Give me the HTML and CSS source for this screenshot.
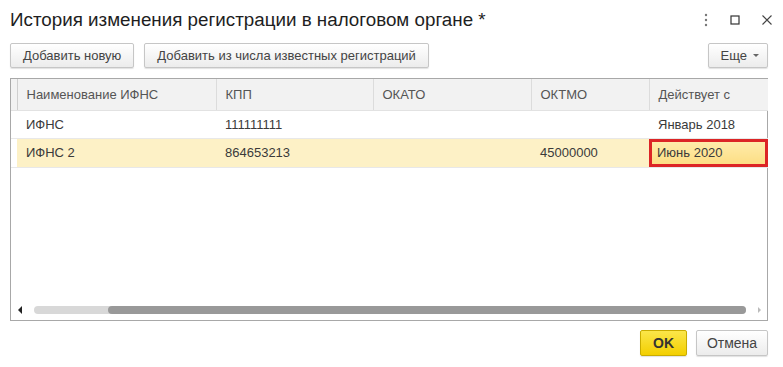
FILE: index.html
```html
<!DOCTYPE html>
<html lang="ru">
<head>
  <meta charset="UTF-8">
  <title>История изменения регистрации в налоговом органе</title>
  <link rel="stylesheet" href="styles.css">
</head>
<body>
<div class="dialog">
  <div class="titlebar">
    <h1 class="title">История изменения регистрации в налоговом органе *</h1>
    <div class="window-controls">
      <svg width="6" height="14" viewBox="0 0 6 14"><circle cx="3" cy="2" r="1.2" fill="#777"/><circle cx="3" cy="7" r="1.2" fill="#777"/><circle cx="3" cy="12" r="1.2" fill="#777"/></svg>
      <svg width="12" height="12" viewBox="0 0 12 12"><rect x="2" y="2" width="8" height="8" fill="none" stroke="#333" stroke-width="1.2"/></svg>
      <svg width="12" height="12" viewBox="0 0 12 12"><path d="M1.5 1.5 L10.5 10.5 M10.5 1.5 L1.5 10.5" stroke="#444" stroke-width="1.1"/></svg>
    </div>
  </div>

  <div class="toolbar">
    <button class="btn">Добавить новую</button>
    <button class="btn">Добавить из числа известных регистраций</button>
    <span class="spacer"></span>
    <button class="btn btn-more">Еще <span class="caret"></span></button>
  </div>

  <!-- Таблица регистраций -->
  <div class="grid">
    <table class="grid-table">
      <colgroup>
        <col class="c0"><col class="c1"><col class="c2"><col class="c3"><col class="c4"><col class="c5">
      </colgroup>
      <thead>
      <tr>
        <th class="mark"></th>
        <th>Наименование ИФНС</th>
        <th>КПП</th>
        <th>ОКАТО</th>
        <th>ОКТМО</th>
        <th>Действует с</th>
      </tr>
      </thead>
      <tbody>
      <tr>
        <td class="mark"></td>
        <td>ИФНС</td>
        <td>111111111</td>
        <td></td>
        <td></td>
        <td>Январь 2018</td>
      </tr>
      <tr class="selected">
        <td class="mark"></td>
        <td>ИФНС 2</td>
        <td>864653213</td>
        <td></td>
        <td>45000000</td>
        <td class="current">Июнь 2020</td>
      </tr>
      </tbody>
    </table>
    <div class="grid-empty"></div>
    <div class="hscroll">
      <span class="arrow-left"></span>
      <div class="track"><div class="thumb"></div></div>
      <span class="arrow-right"></span>
    </div>
  </div>

  <div class="footer">
    <button class="btn btn-ok">OK</button>
    <button class="btn btn-cancel">Отмена</button>
  </div>
</div>
</body>
</html>
```

FILE: styles.css
```css
* {
  margin: 0;
  padding: 0;
  box-sizing: border-box;
}

body {
  background: #fff;
  font-family: 'Liberation Sans', Arial, sans-serif;
  color: #333;
  width: 783px;
  height: 367px;
  overflow: hidden;
}

.dialog {
  padding: 0 15px 0 10px;
}

.titlebar {
  height: 43px;
  display: flex;
  align-items: flex-start;
  padding-top: 8px;
}

.title {
  flex: 1;
  font-size: 18.8px;
  font-weight: normal;
  color: #1e1e1e;
  line-height: 24px;
}

.window-controls {
  display: flex;
  align-items: center;
  gap: 20px;
  height: 24px;
  margin-right: -5px;
}

.toolbar {
  display: flex;
  gap: 10px;
  height: 25px;
  margin-bottom: 10px;
}

.spacer {
  flex: 1;
}

.btn {
  font-family: inherit;
  font-size: 13px;
  color: #444;
  height: 25px;
  padding: 0 12px;
  border: 1px solid #c6c6c6;
  border-radius: 2px;
  background: linear-gradient(#fff, #ececec);
  box-shadow: 0 1px 1px rgba(0, 0, 0, 0.12);
}

.btn-more {
  padding: 0 8px 0 12px;
  display: flex;
  align-items: center;
  gap: 6px;
}

.caret {
  width: 0;
  height: 0;
  border-left: 3px solid transparent;
  border-right: 3px solid transparent;
  border-top: 3px solid #666;
}

.grid {
  border: 1px solid #a8a8a8;
  height: 243px;
  display: flex;
  flex-direction: column;
}

.grid-table {
  width: 100%;
  border-collapse: collapse;
  table-layout: fixed;
  font-size: 13px;
}

.c0 { width: 6px; }
.c1 { width: 199px; }
.c2 { width: 157px; }
.c3 { width: 158px; }
.c4 { width: 118px; }
.c5 { width: 119px; }

.grid-table th {
  height: 31px;
  background: #f2f2f2;
  font-weight: normal;
  color: #555;
  text-align: left;
  padding: 0 9px;
  border-right: 1px solid #dcdcdc;
  border-bottom: 1px solid #e2e2e2;
}

.grid-table th:last-child {
  border-right: none;
}

.grid-table th.mark {
  padding: 0;
  border-right: 1px solid #cfcfcf;
}

.grid-table td {
  height: 28px;
  padding: 0 9px;
  color: #3a3a3a;
  border-bottom: 1px solid #e8e8e8;
  white-space: nowrap;
}

.grid-table td.mark {
  padding: 0;
}

.grid-table tbody tr:last-child td {
  height: 29px;
}

.selected td {
  background: #fdf1c6;
}

.selected td.mark {
  background: #fff;
}

.selected td.current {
  background: linear-gradient(#ffeeb0, #fcdc80);
  box-shadow: inset 0 0 0 3px #dc2526;
  padding-left: 8px;
}

.grid-empty {
  flex: 1;
}

.hscroll {
  height: 16px;
  display: flex;
  align-items: center;
  padding: 0 6px 4px 7px;
}

.arrow-left {
  width: 0;
  height: 0;
  border-top: 4px solid transparent;
  border-bottom: 4px solid transparent;
  border-right: 4px solid #222;
  margin-right: 12px;
}

.arrow-right {
  width: 0;
  height: 0;
  border-top: 3px solid transparent;
  border-bottom: 3px solid transparent;
  border-left: 3px solid #bbb;
  margin-left: 12px;
}

.track {
  flex: 1;
  height: 8px;
  border-radius: 4px;
  background: #d8d8d8;
  display: flex;
  justify-content: flex-end;
}

.thumb {
  width: 638px;
  height: 8px;
  border-radius: 4px;
  background: #999;
}

.footer {
  display: flex;
  justify-content: flex-end;
  gap: 9px;
  margin-top: 9px;
}

.btn-ok {
  width: 47px;
  height: 26px;
  padding: 0;
  font-size: 14px;
  font-weight: bold;
  color: #333;
  border-color: #c9ac00;
  background: linear-gradient(#fbe64a, #f3cf00);
}

.btn-cancel {
  width: 72px;
  height: 26px;
  padding: 0;
  font-size: 14px;
  color: #444;
}
```
